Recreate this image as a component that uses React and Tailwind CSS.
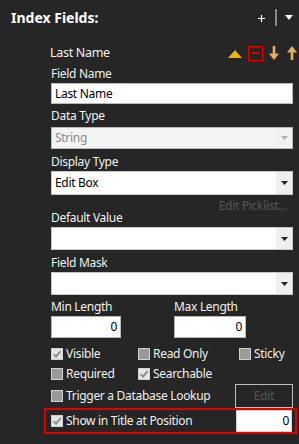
import React from "react";

const Arrow = ({ color = "#000" }) => (
  <svg width="7" height="4" viewBox="0 0 7 4"><path d="M0 0H7L3.5 4Z" fill={color} /></svg>
);

const Select = ({ value = "", h = "h-[23px]", disabled = false }) => (
  <div className={`flex ${h} border ${disabled ? "border-[#b8b8b8] bg-[#f3f3f3]" : "border-[#c8c8c8] bg-white"}`}>
    <div className={`flex-1 flex items-center pl-[3px] text-[12px] ${disabled ? "text-[#8a8a8a]" : "text-black"}`}>{value}</div>
    <div className={`w-[16px] flex items-center justify-center ${disabled ? "bg-[#f0f0f0]" : "bg-[#efefef]"}`}>
      <Arrow color={disabled ? "#b0b0b0" : "#222"} />
    </div>
  </div>
);

const Check = ({ checked }) => (
  <div className={`w-[12px] h-[12px] border flex items-center justify-center ${checked ? "bg-[#e6e6e6] border-[#cfcfcf]" : "bg-[#9a9a9a] border-[#d0d0d0]"}`}>
    {checked && (
      <svg width="10" height="10" viewBox="0 0 10 10"><path d="M1.5 5.2L4 7.6L8.6 2.2" stroke="#8a8a8a" strokeWidth="1.8" fill="none" /></svg>
    )}
  </div>
);

const CB = ({ checked, label, w }) => (
  <div className={`flex items-center gap-[3px] ${w}`}>
    <Check checked={checked} />
    <span className="text-[12px] text-[#f0f0f0]">{label}</span>
  </div>
);

const Label = ({ children, cls = "" }) => (
  <div className={`h-[16px] leading-[16px] text-[12px] text-[#f0f0f0] ${cls}`}>{children}</div>
);

export default function App() {
  return (
    <div className="w-[299px] h-[444px] bg-[#262626] overflow-hidden tracking-[-0.3px]" style={{ fontFamily: '"Noto Sans", "Open Sans", sans-serif' }}>
      <div className="h-[35px] flex items-center pl-[11px] pr-[6px]">
        <span className="text-[14px] font-bold text-white tracking-normal">Index Fields:</span>
        <div className="flex-1" />
        <svg width="7" height="7" viewBox="0 0 7 7" className="mt-[1px]"><path d="M3.5 0V7M0 3.5H7" stroke="#fff" strokeWidth="1.2" /></svg>
        <div className="w-[2px] h-[17px] bg-[#8a8a8a] ml-[10px] mt-[-1px]" />
        <svg width="8" height="5" viewBox="0 0 8 5" className="ml-[8px]"><path d="M0 0H8L4 5Z" fill="#fff" /></svg>
      </div>

      <div className="ml-[51px] mr-[6px] flex flex-col">
        <div className="mt-[8px] h-[20px] flex items-center -ml-[1px]">
          <span className="text-[12.5px] text-[#f0f0f0]">Last Name</span>
          <div className="flex-1" />
          <svg width="14" height="8" viewBox="0 0 14 8" className="mt-[2px]"><path d="M0 8H14L7 0Z" fill="#f2b600" /></svg>
          <div className="ml-[6px] w-[15px] h-[15px] border border-[#e00000] flex items-center justify-center">
            <div className="w-[7px] h-[2px] bg-[#e00000]" />
          </div>
          <svg width="10" height="14" viewBox="0 0 10 14" className="ml-[6px]"><path d="M5 0V9" stroke="#e5b064" strokeWidth="2.6" /><path d="M0 7.5H10L5 14Z" fill="#e5b064" /></svg>
          <svg width="10" height="14" viewBox="0 0 10 14" className="ml-[8px] -mr-[4px]"><path d="M5 5V14" stroke="#e5b064" strokeWidth="2.6" /><path d="M0 6.5H10L5 0Z" fill="#e5b064" /></svg>
        </div>

        <Label cls="mt-[3px]">Field Name</Label>
        <div className="mt-[1px] h-[21px] border border-[#b8b8b8] bg-white flex items-center pl-[3px] text-[12px] text-black">Last Name</div>

        <Label cls="mt-[4px]">Data Type</Label>
        <div className="mt-[3px]"><Select value="String" h="h-[22px]" disabled /></div>

        <Label cls="mt-[5px]">Display Type</Label>
        <div className="mt-[1px]"><Select value="Edit Box" h="h-[24px]" /></div>

        <div className="mt-[6px] h-[10px] leading-[10px] text-[12px] text-[#565656] text-right pr-[6px]">Edit Picklist...</div>
        <div className="h-[14px] leading-[14px] text-[12px] text-[#f0f0f0]">Default Value</div>
        <div className="mt-[2px]"><Select h="h-[23px]" /></div>

        <Label cls="mt-[5px]">Field Mask</Label>
        <div className="mt-[1px]"><Select h="h-[23px]" /></div>

        <div className="mt-[4px] flex">
          <div className="w-[123px] flex flex-col">
            <Label>Min Length</Label>
            <div className="mt-[1px] w-[70px] h-[22px] border border-[#b8b8b8] bg-white flex items-center justify-end pr-[3px] text-[12px] text-black">0</div>
          </div>
          <div className="flex flex-col">
            <Label>Max Length</Label>
            <div className="mt-[1px] w-[72px] h-[22px] border border-[#b8b8b8] bg-white flex items-center justify-end pr-[3px] text-[12px] text-black">0</div>
          </div>
        </div>

        <div className="mt-[6px] h-[20px] flex items-center">
          <CB checked label="Visible" w="w-[87px]" />
          <CB label="Read Only" w="w-[101px]" />
          <CB label="Sticky" />
        </div>
        <div className="h-[20px] flex items-center">
          <CB label="Required" w="w-[87px]" />
          <CB checked label="Searchable" />
        </div>
        <div className="h-[24px] flex items-center">
          <CB label="Trigger a Database Lookup" />
          <div className="flex-1" />
          <div className="w-[58px] h-[24px] border border-[#bdbdbd] flex items-center justify-center text-[12px] text-[#555]">Edit</div>
        </div>
        <div className="-ml-[7px] -mr-[4px] h-[26px] border-2 border-[#e00000] flex items-center pl-[5px] pr-[3px]">
          <CB checked label="Show in Title at Position" />
          <div className="flex-1" />
          <div className="w-[56px] h-[22px] bg-white border border-[#d0d0d0] flex items-center justify-end pr-[2px] text-[12px] text-black">0</div>
        </div>
      </div>
    </div>
  );
}
